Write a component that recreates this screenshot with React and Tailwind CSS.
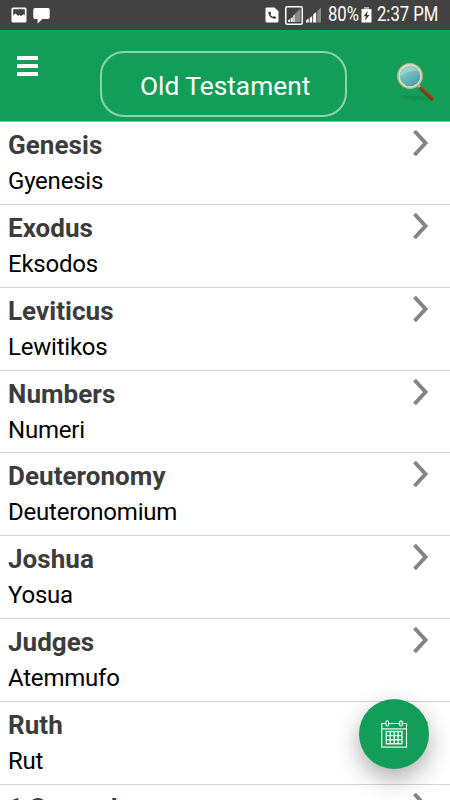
const books = [
  { name: 'Genesis', local: 'Gyenesis' },
  { name: 'Exodus', local: 'Eksodos' },
  { name: 'Leviticus', local: 'Lewitikos' },
  { name: 'Numbers', local: 'Numeri' },
  { name: 'Deuteronomy', local: 'Deuteronomium' },
  { name: 'Joshua', local: 'Yosua' },
  { name: 'Judges', local: 'Atemmufo' },
  { name: 'Ruth', local: 'Rut' },
  { name: '1 Samuel', local: '1 Samuel' }
];

function StatusBar() {
  return (
    <div className="flex h-[30px] shrink-0 items-center justify-between bg-[#424242] pl-[11px] pr-[13px] text-white">
      <div className="flex items-center gap-[6px]">
        <svg width="16" height="16" viewBox="0 0 16 16">
          <rect x="0.5" y="0.5" width="15" height="15" rx="1.5" fill="#fff" />
          <path d="M2.2 2.2h11.6v6.3l-1.3-1.2-2.7 1.9-1.3-1.4-1.2 1.2-2.8-2.4-2.3 2z" fill="#424242" />
        </svg>
        <svg width="17" height="17" viewBox="0 0 17 17">
          <path d="M2 1h13a1.7 1.7 0 0 1 1.7 1.7v7.6A1.7 1.7 0 0 1 15 12H9.4L4.6 16.6V12H2A1.7 1.7 0 0 1 .3 10.3V2.7A1.7 1.7 0 0 1 2 1z" fill="#fff" />
        </svg>
      </div>
      <div className="flex items-center">
        <svg width="14" height="16" viewBox="0 0 14 16">
          <path d="M1.5.5H9.5l4 3.700v10a1.3 1.3 0 0 1-1.3 1.3H1.8A1.3 1.3 0 0 1 .5 14.2V1.5a1 1 0 0 1 1-1z" fill="#fff" />
          <path d="M3.4 5c-.4 3.700 3.200 7.200 7.200 6.600l.3-1.700-2-.9-.9.900c-1.300-.5-2.200-1.400-2.600-2.500l.8-.9-.9-2z" fill="#333" />
        </svg>
        <svg className="ml-[6px]" width="18" height="19" viewBox="0 0 18 19">
          <rect x="0.75" y="0.75" width="16.5" height="17.5" rx="1.5" fill="none" stroke="#fff" strokeWidth="1.5" />
          <path d="M3 16v-1.500l2-1.500v3zM5.700 16v-3.500l2-1.500v5zM8.300 16v-6.500l1.500-1.300V16z" fill="#fff" />
          <path d="M9.800 16V8L15.500 2.500V16z" fill="#8a8a8a" />
        </svg>
        <svg className="ml-[3px]" width="16" height="16" viewBox="0 0 16 16">
          <path d="M0 15.500v-2l2.700-2v4zM3.700 15.500V11l2.500-2v6.500zM7.200 15.500V7.500l3-2.500v10.500z" fill="#fff" />
          <path d="M11.200 15.500V4l3.800-3.500v15z" fill="#8a8a8a" />
        </svg>
        <span className="ml-[6px] w-[30px] origin-left scale-x-[0.855] whitespace-nowrap text-[19.5px] leading-[30px]">80%</span>
        <svg className="ml-[3px]" width="11" height="16" viewBox="0 0 11 16">
          <path d="M3 0h5v2H3z" fill="#aaa" />
          <path d="M.5 2h10v13.500H.5z" fill="#fff" />
          <path d="M6.800 4 2.500 9.200H5L4 13.500 8.500 8H6z" fill="#333" />
        </svg>
        <span className="ml-[5px] w-[60px] origin-left scale-x-[0.855] whitespace-nowrap text-[19.5px] leading-[30px]">2:37 PM</span>
      </div>
    </div>
  );
}

function SearchIcon() {
  return (
    <svg width="42" height="44" viewBox="0 0 42 44">
      <defs>
        <linearGradient id="lens" x1="0.1" y1="0" x2="0.8" y2="1">
          <stop offset="0" stopColor="#a9dcd4" />
          <stop offset="0.5" stopColor="#6ab9b9" />
          <stop offset="1" stopColor="#3f94ae" />
        </linearGradient>
        <linearGradient id="handle" x1="0" y1="1" x2="1" y2="0">
          <stop offset="0.3" stopColor="#5c2c13" />
          <stop offset="0.8" stopColor="#b96a35" />
        </linearGradient>
      </defs>
      <path d="M5 37c8-2 24-2.500 32 2.500-8 1-22 0-32-2.500z" fill="#0b6f3d" opacity="0.3" />
      <path d="m24.500 25.500 4 4" stroke="#b9a37e" strokeWidth="2.500" />
      <path d="M27.500 28.500 38 38.500" stroke="url(#handle)" strokeWidth="4.200" strokeLinecap="round" />
      <circle cx="16" cy="16" r="12.2" fill="url(#lens)" stroke="#c9b07c" strokeWidth="1.5" />
      <circle cx="16" cy="16" r="11" fill="none" stroke="#d9e3cf" strokeWidth="1.3" />
      <path d="M6.500 16c1-6 6-9 11-8.500 4 .5 6 2 7 4-6-1-13 .5-18 4.500z" fill="#c9e9e2" opacity="0.35" />
    </svg>
  );
}

function Header() {
  return (
    <header className="flex h-[92px] shrink-0 items-start border-b border-[#7ccaa0] bg-[#129e59]">
      <button className="mt-[26px] ml-[17px] flex w-[21px] flex-col gap-1" aria-label="Menu">
        <span className="h-1 w-full bg-white" />
        <span className="h-1 w-full bg-white" />
        <span className="h-1 w-full bg-white" />
      </button>
      <h1 className="mt-[21px] ml-[62px] h-[66px] w-[247px] rounded-[24px] border-2 border-[#8fd0ae] pl-[38px] text-[26.3px] leading-[67px] whitespace-nowrap text-white">
        Old Testament
      </h1>
      <button className="mt-[30px] ml-[47px]" aria-label="Search">
        <SearchIcon />
      </button>
    </header>
  );
}

function BookRow({ book }) {
  return (
    <li className="flex h-[82.86px] shrink-0 justify-between border-b border-[#d4d4d4] pr-[21px] pl-2">
      <div className="pt-[7px] whitespace-nowrap">
        <h2 className="text-[26px] leading-[32px] font-bold tracking-[0.05px] text-[#3c3c3c]">{book.name}</h2>
        <p className="mt-1 text-[24px] leading-[32px] tracking-[-0.22px] text-black">{book.local}</p>
      </div>
      <svg className="mt-[7px]" width="17" height="28" viewBox="0 0 17 28" fill="none">
        <path d="M2.500 2 13.500 14 2.500 26" stroke="#858585" strokeWidth="4" />
      </svg>
    </li>
  );
}

function CalendarButton() {
  return (
    <button
      className="absolute top-[699px] left-[359px] flex size-[70px] items-center justify-center rounded-full bg-[#129e59] shadow-[0_10px_24px_rgba(0,0,0,0.32)]"
      aria-label="Calendar"
    >
      <svg width="28" height="28" viewBox="0 0 28 28" fill="none" stroke="#e3f5eb" strokeWidth="1.2">
        <path d="M5.500 3.500H1.800v23.700h24.700V3.500h-3.700M9 3.500h10.300M1.800 8.800h24.700" />
        <rect x="6" y="0.8" width="2.600" height="5.200" rx="1.300" />
        <rect x="19.700" y="0.8" width="2.600" height="5.200" rx="1.300" />
        <path strokeWidth="1.4" d="M6.300 11.500h15.700v12.300H6.300zM10.200 11.500v12.300M14.200 11.500v12.300M18.100 11.500v12.300M6.300 15.600h15.700M6.300 19.700h15.700" />
      </svg>
    </button>
  );
}

export default function App() {
  return (
    <div className="relative flex h-[800px] w-[450px] flex-col overflow-hidden bg-white font-[Roboto,sans-serif]">
      <StatusBar />
      <Header />
      <ul className="flex min-h-0 flex-1 flex-col overflow-hidden">
        {books.map((book) => (
          <BookRow key={book.name} book={book} />
        ))}
      </ul>
      <CalendarButton />
    </div>
  );
}
